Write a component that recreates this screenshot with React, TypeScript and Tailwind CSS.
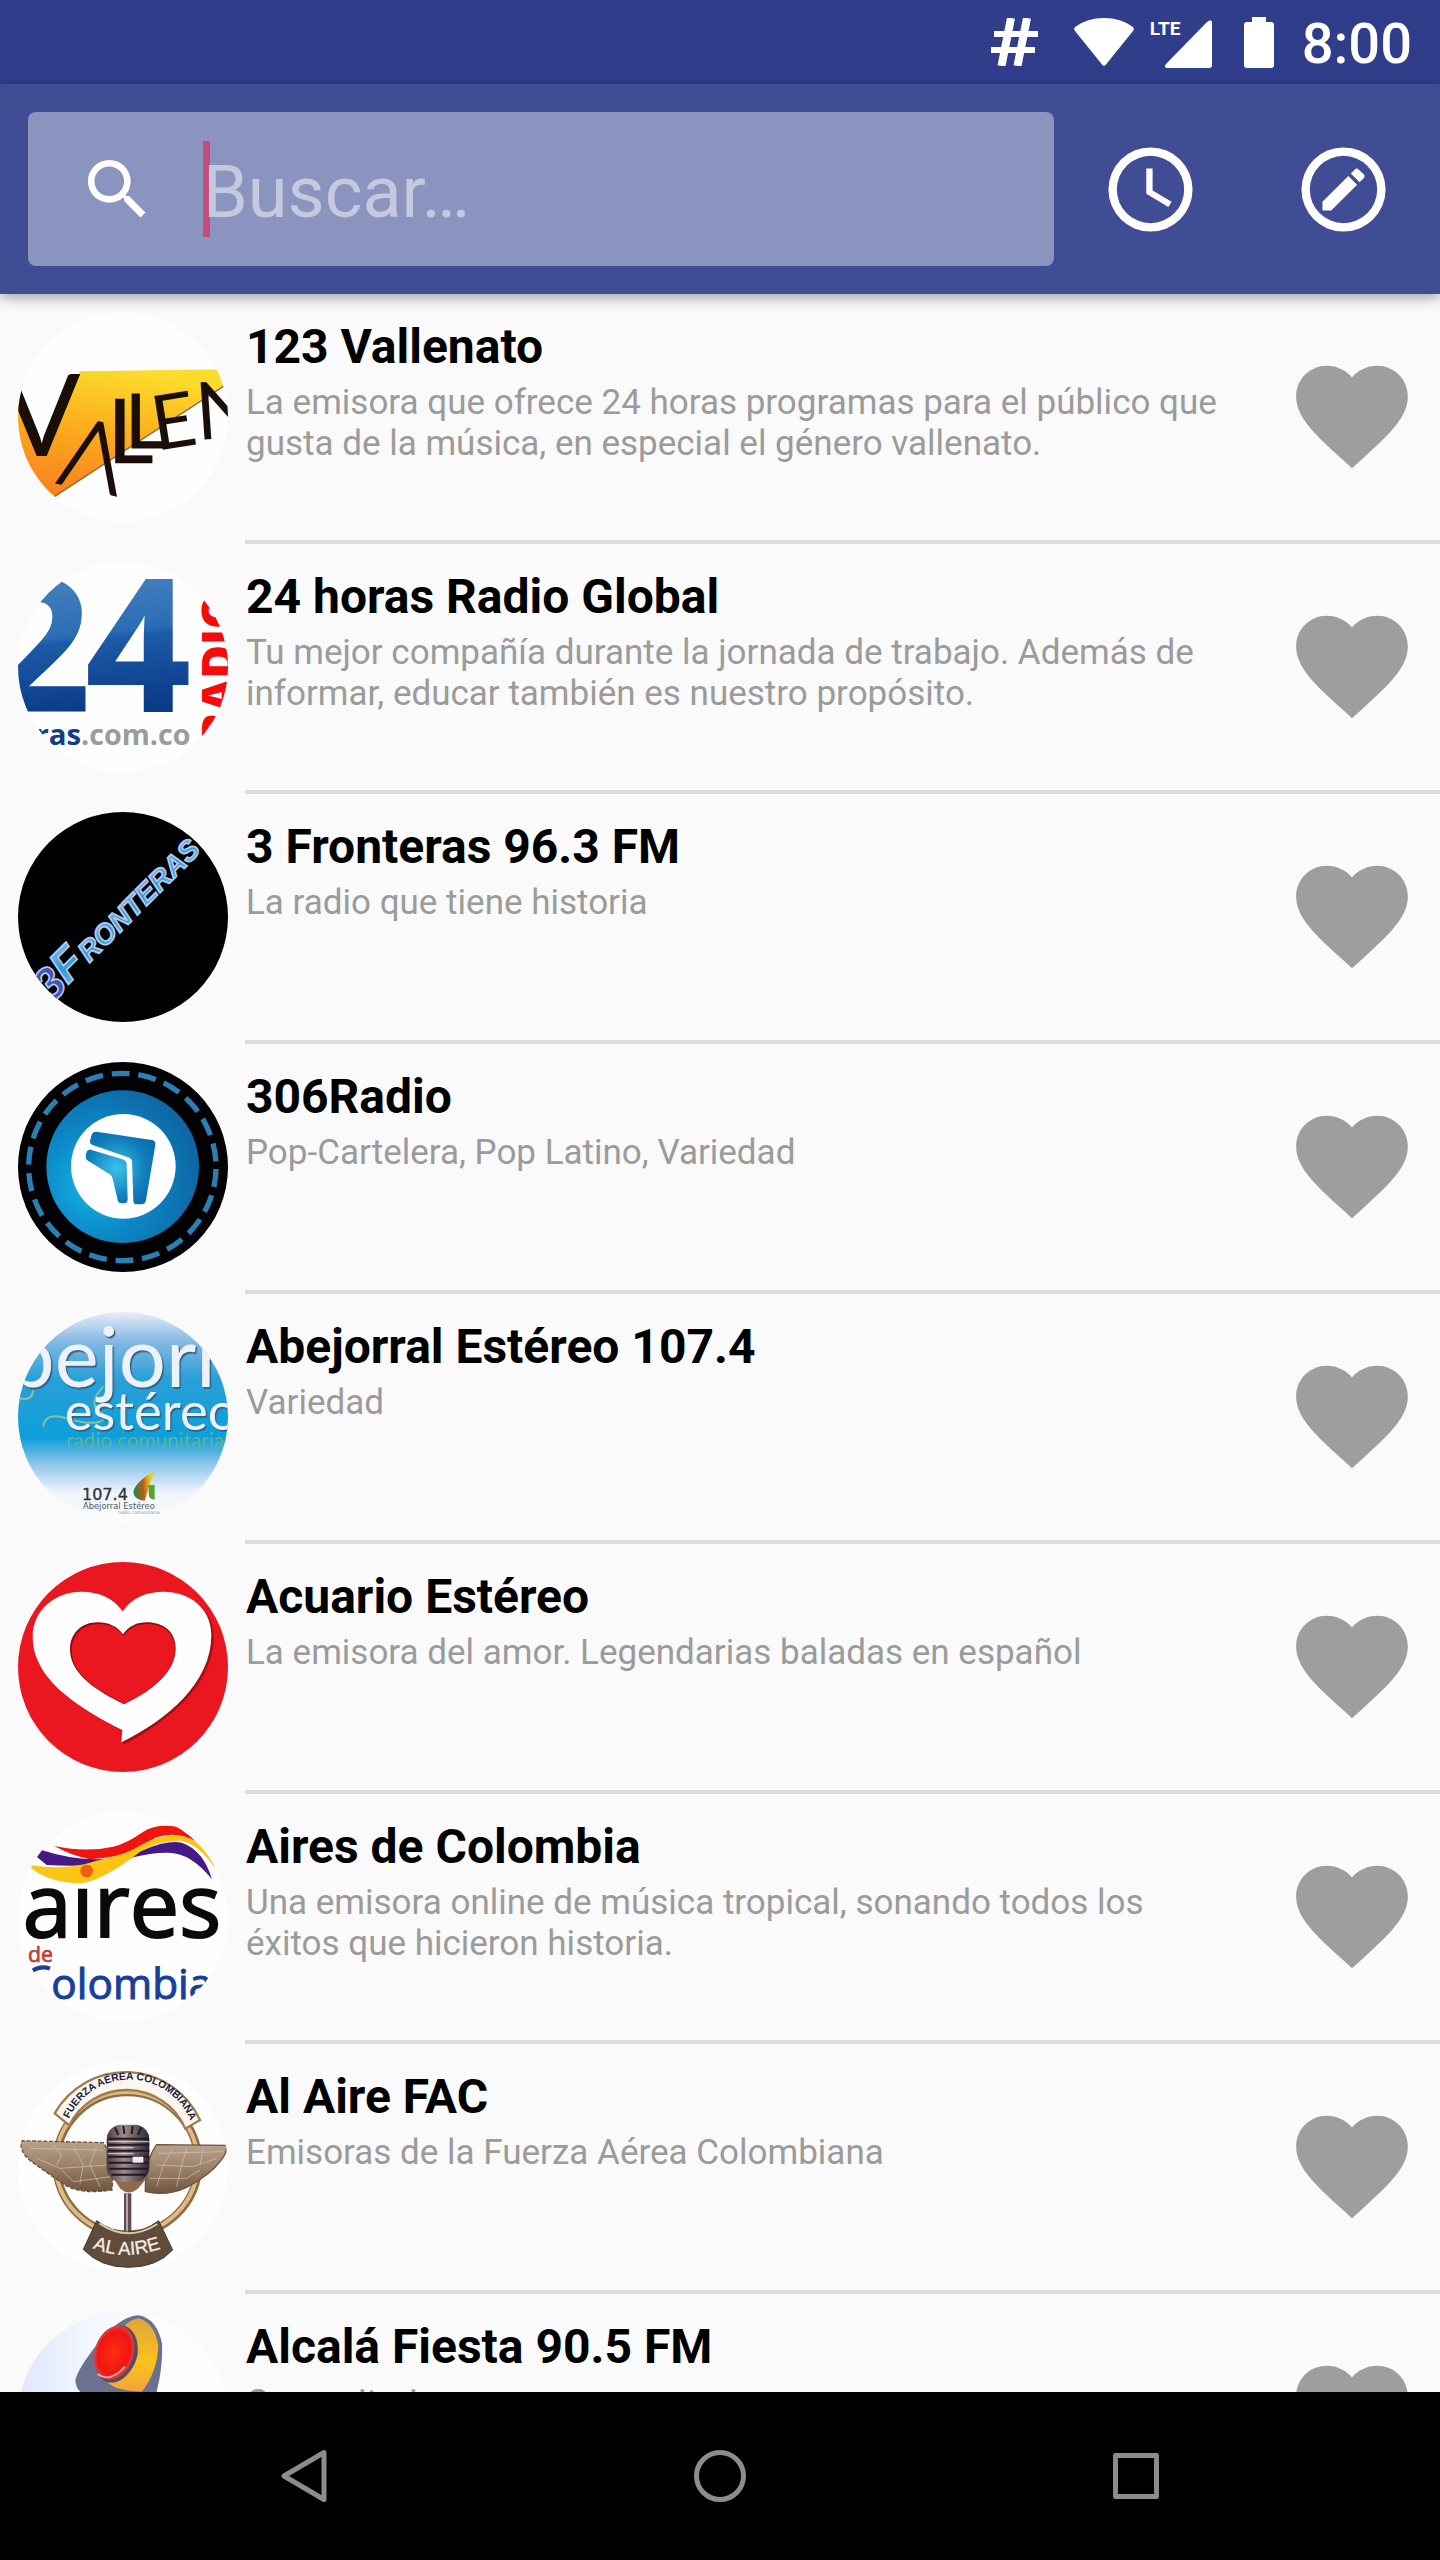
import type { ReactNode } from "react";

function Vallenato() {
  return (
    <>
      <defs>
        <linearGradient id="val-sun" x1="0.2" y1="1" x2="0.5" y2="0">
          <stop offset="0" stopColor="#f7801f" />
          <stop offset="0.5" stopColor="#fbaa1c" />
          <stop offset="1" stopColor="#fbdc2c" />
        </linearGradient>
      </defs>
      <rect x="54" y="36" width="630" height="630" fill="#fefefe" />
      <path d="M54 270L130 465L240 214L690 208V246L165 592L54 500Z" fill="url(#val-sun)" />
      <path d="M684 250L165 588" stroke="#8d6a4a" strokeWidth="4" />
      <g fill="#1a0f08" fontFamily="Lato, sans-serif">
        <text transform="translate(8 468)" fontSize="345">V</text>
        <text transform="translate(166 548) rotate(12)" fontSize="290" fontWeight="300" stroke="#1a0f08" strokeWidth="5">Λ</text>
        <text transform="translate(322 488)" fontSize="270" stroke="#1a0f08" strokeWidth="2">L</text>
        <text transform="translate(376 444)" fontSize="225" stroke="#1a0f08" strokeWidth="3">L</text>
        <text transform="translate(468 452) rotate(-9)" fontSize="228">E</text>
        <text transform="translate(592 420) rotate(-4)" fontSize="240">N</text>
      </g>
    </>
  );
}

function VeinticuatroHoras() {
  return (
    <>
      <defs>
        <linearGradient id="h24-blue" gradientUnits="userSpaceOnUse" x1="200" y1="90" x2="240" y2="486">
          <stop offset="0" stopColor="#4380bd" />
          <stop offset="0.42" stopColor="#2b6cb4" />
          <stop offset="0.47" stopColor="#1d5ba8" />
          <stop offset="1" stopColor="#0a3b87" />
        </linearGradient>
      </defs>
      <rect x="54" y="36" width="630" height="630" fill="#fefefe" />
      <g fontFamily="'Open Sans', sans-serif" fontWeight="700">
        <g stroke="url(#h24-blue)" strokeWidth="6">
          <text x="-42" y="484" fontSize="548" fill="url(#h24-blue)">2</text>
          <text x="258" y="484" fontSize="548" fill="url(#h24-blue)">4</text>
        </g>
        <text x="243" y="585" fontSize="88" fill="#153d84" textAnchor="end">ras</text>
        <text x="243" y="585" fontSize="86" fill="#9b9b9b">.com.co</text>
        <text transform="translate(706 580) rotate(-90)" fontSize="138" fill="#f40b0b" fontWeight="800">RADIO</text>
      </g>
    </>
  );
}

function Fronteras() {
  return (
    <>
      <defs>
        <linearGradient id="fro-ice" x1="0" y1="0" x2="0" y2="1">
          <stop offset="0" stopColor="#8ec9f0" />
          <stop offset="0.5" stopColor="#2b9bd4" />
          <stop offset="1" stopColor="#55c4ec" />
        </linearGradient>
      </defs>
      <rect x="54" y="36" width="630" height="630" fill="#010103" />
      <g
        transform="translate(268 490) rotate(-45)"
        fontFamily="'Liberation Sans', sans-serif"
        fontWeight="700"
        fontStyle="italic"
        fill="url(#fro-ice)"
        stroke="#b9c6ee"
        strokeWidth="5"
      >
        <text x="0" y="0" fontSize="85">RONTERAS</text>
        <text x="-92" y="0" fontSize="138">F</text>
        <text x="-168" y="6" fontSize="138" fill="#3d55b5">3</text>
      </g>
    </>
  );
}

function Radio306() {
  return (
    <>
      <defs>
        <radialGradient id="r306-disc" cx="0.3" cy="0.62" r="0.7">
          <stop offset="0" stopColor="#16b4e6" />
          <stop offset="0.45" stopColor="#0c8cc9" />
          <stop offset="1" stopColor="#0d67a5" />
        </radialGradient>
        <radialGradient id="r306-arrow" gradientUnits="userSpaceOnUse" cx="350" cy="355" r="150">
          <stop offset="0" stopColor="#3cc0ea" />
          <stop offset="0.6" stopColor="#0f7dbb" />
          <stop offset="1" stopColor="#0c64a3" />
        </radialGradient>
      </defs>
      <rect x="54" y="36" width="630" height="630" fill="#020204" />
      <circle cx="367" cy="351" r="281" fill="none" stroke="#2a80b2" strokeWidth="16" strokeDasharray="54 26.25" strokeDashoffset="-6" />
      <circle cx="368" cy="350" r="229" fill="url(#r306-disc)" />
      <circle cx="370" cy="349" r="157" fill="#fff" />
      <path
        d="M290 245L455 270Q468 272 466 285L438 450Q436 463 424 463H410Q400 463 400 452L396 334Q396 326 388 323L278 285Q269 282 270 274L274 257Q277 244 290 245Z"
        fill="url(#r306-arrow)"
      />
      <path
        d="M272 299L368 328Q379 332 380 343L383 448Q383 460 373 460H364Q355 460 353 450L338 386Q336 376 328 372L264 332Q256 327 257 318Q260 296 272 299Z"
        fill="url(#r306-arrow)"
      />
    </>
  );
}

function Abejorral() {
  return (
    <>
      <defs>
        <linearGradient id="abe-sky" x1="0" y1="0" x2="0" y2="1">
          <stop offset="0" stopColor="#e8eef8" />
          <stop offset="0.14" stopColor="#84b8e2" />
          <stop offset="0.32" stopColor="#2a9fd8" />
          <stop offset="0.6" stopColor="#0d9fda" />
          <stop offset="0.72" stopColor="#8cc4ea" />
          <stop offset="0.86" stopColor="#eef5fc" />
          <stop offset="1" stopColor="#fdfdfe" />
        </linearGradient>
        <linearGradient id="abe-leaf" x1="0" y1="0.5" x2="1" y2="0.4">
          <stop offset="0" stopColor="#1b8a4a" />
          <stop offset="0.45" stopColor="#c0571d" />
          <stop offset="0.8" stopColor="#e3cf1c" />
        </linearGradient>
      </defs>
      <rect x="54" y="36" width="630" height="630" fill="url(#abe-sky)" />
      <path d="M130 380Q135 335 200 355T300 365Q330 350 290 330Q270 300 310 260M60 295Q95 305 100 270" fill="none" stroke="#8cbf9c" strokeWidth="6" />
      <g
        fontFamily="Lato, sans-serif"
        fill="#eef2f7"
        className="[filter:drop-shadow(4px_5px_1px_#2c5f86)]"
      >
        <text x="24" y="262" fontSize="250">bejorra</text>
        <text x="194" y="391" fontSize="158">estéreo</text>
      </g>
      <text x="198" y="445" fontSize="62" fontFamily="Lato, sans-serif" fill="#5fb39a">radio comunitaria</text>
      <g fontFamily="'DejaVu Sans', sans-serif">
        <text x="246" y="600" fontSize="48" fill="#2f3336" stroke="#2f3336" strokeWidth="1">107.4</text>
        <text x="249" y="626" fontSize="25" fill="#50585c">Abejorral Estéreo</text>
        <text x="355" y="642" fontSize="14" fill="#8d9498">radio comunitaria</text>
      </g>
      <path d="M400 578Q402 548 464 512Q446 560 434 602Q404 600 400 578Z" fill="url(#abe-leaf)" />
      <path d="M446 555H464V598Q446 600 446 580Z" fill="#57a52c" />
    </>
  );
}

function Acuario() {
  return (
    <>
      <rect x="54" y="36" width="630" height="630" fill="#ea1620" />
      <path
        d="M368 188C340 145 295 125 245 125C165 125 98 180 98 260C98 390 240 475 368 540L364 580C500 510 636 400 636 255C636 175 570 125 490 125C440 125 395 145 368 188Z"
        fill="#8d0c12"
        opacity="0.75"
        transform="translate(5 5)"
      />
      <path
        d="M368 184C340 143 295 125 245 125C165 125 98 180 98 260C98 390 240 475 367 540L364 577C500 510 634 400 634 255C634 175 570 125 490 125C440 125 395 143 368 184Z"
        fill="#fefefe"
      />
      <path
        d="M369 253C350 228 325 217 293 217C245 217 210 250 210 298C210 375 295 425 372 463C450 425 527 370 527 295C527 245 490 217 440 217C410 217 388 228 369 253Z"
        fill="#8d0c12"
      />
      <path
        d="M371 258C352 233 327 222 297 222C250 222 215 255 215 301C215 377 298 424 373 461C450 424 525 371 525 297C525 250 490 222 441 222C412 222 390 233 371 258Z"
        fill="#ea1620"
      />
    </>
  );
}

function Aires() {
  return (
    <>
      <rect x="54" y="36" width="630" height="630" fill="#fefefe" />
      <g fontFamily="'Open Sans', sans-serif">
        <text x="68" y="410" fontSize="264" fontWeight="500" fill="#0a0a0a" stroke="#0a0a0a" strokeWidth="6">aires</text>
        <text x="84" y="487" fontSize="64" fill="#c63a34" stroke="#c63a34" strokeWidth="2">de</text>
        <text x="154" y="598" fontSize="127" fontWeight="500" fill="#17409c" stroke="#17409c" strokeWidth="3">olombia</text>
      </g>
      <path d="M98 512Q122 496 150 506" fill="none" stroke="#17409c" strokeWidth="12" />
      <path d="M124 150Q210 178 290 178Q360 178 430 150Q500 120 545 128Q610 150 636 238Q570 155 500 158Q450 158 400 172Q300 205 140 195L110 170Z" fill="#451a86" />
      <path d="M94 196Q200 212 290 182Q360 170 430 130Q500 95 565 112Q620 140 645 205Q595 130 540 122Q480 120 420 155Q320 235 245 250Q150 250 94 204Z" fill="#fcc414" />
      <path d="M163 138Q260 158 340 140Q380 130 430 95Q470 70 530 80Q565 95 585 122Q530 92 470 112Q430 130 400 148Q350 175 270 178Q210 165 163 138Z" fill="#f0160f" />
      <circle cx="260" cy="213" r="19" fill="#ee5f14" />
    </>
  );
}

function AlAire() {
  return (
    <>
      <defs>
        <path id="fac-arc" d="M207 206A198 198 0 0 1 578 232" />
        <path id="fac-base" d="M278 594Q385 640 520 582" />
        <linearGradient id="fac-wing" x1="0" y1="0" x2="0" y2="1">
          <stop offset="0" stopColor="#b9a38e" />
          <stop offset="0.5" stopColor="#9b8069" />
          <stop offset="1" stopColor="#6f5440" />
        </linearGradient>
        <linearGradient id="fac-mic" x1="0" y1="0" x2="1" y2="0">
          <stop offset="0" stopColor="#4b3a3e" />
          <stop offset="0.4" stopColor="#a08b8c" />
          <stop offset="1" stopColor="#2d2633" />
        </linearGradient>
      </defs>
      <rect x="54" y="36" width="630" height="630" fill="#fefefe" />
      <circle cx="382" cy="340" r="213" fill="none" stroke="#8f6c43" strokeWidth="24" />
      <circle cx="380" cy="339" r="213" fill="none" stroke="#dcbb84" strokeWidth="12" />
      <path d="M164 190A245 245 0 0 1 600 210L556 236A192 192 0 0 0 208 226Z" fill="#fbf7f0" stroke="#a07c4c" strokeWidth="7" />
      <text fontFamily="'Liberation Sans', sans-serif" fontWeight="700" fontSize="31" fill="#20203f">
        <textPath href="#fac-arc">FUERZA AÉREA COLOMBIANA</textPath>
      </text>
      <path d="M62 272L310 278Q345 330 336 420Q240 435 190 402Q130 360 95 335Q60 310 62 272Z" fill="url(#fac-wing)" stroke="#6d5138" strokeWidth="4" strokeDasharray="12 5" />
      <path d="M680 286L470 284Q435 330 436 425Q500 440 560 412Q630 375 660 335Q682 310 680 286Z" fill="url(#fac-wing)" stroke="#6d5138" strokeWidth="4" />
      <path
        d="M90 295L310 300M110 325L180 355L320 345M180 355L220 395L330 380M160 285L185 315L170 345M220 290L250 345L240 400M290 290L270 345L300 410M470 345L580 350L650 325M450 385L560 385L600 360M520 295L490 345L470 410M560 295L545 345L530 410M610 295L600 345M475 310L670 305"
        fill="none"
        stroke="#d3bfa7"
        strokeWidth="3"
        opacity="0.75"
      />
      <path d="M372 430H394V552H372Z" fill="#5d4d4f" />
      <path d="M378 430H384V552H378Z" fill="#b6a9a6" />
      <path d="M340 385H440L415 415Q385 440 360 415Z" fill="#8e6a4a" />
      <rect x="320" y="224" width="128" height="172" rx="44" fill="url(#fac-mic)" />
      <path d="M326 266H446M324 284H448M324 302H448M324 320H448M326 338H446M328 356H444M334 374H438" stroke="#1f1a24" strokeWidth="6" />
      <path d="M345 232L355 255M370 228L373 252M398 228L395 252M424 232L414 255" stroke="#1f1a24" strokeWidth="6" />
      <path d="M326 275H446M324 293H400M324 311H400" stroke="#d9cbca" strokeWidth="3" />
      <rect x="398" y="320" width="32" height="18" fill="#f2ecee" />
      <path d="M290 512Q385 580 476 512L518 600Q470 652 385 652Q300 652 250 598Z" fill="#5f4c3b" stroke="#4a392b" strokeWidth="3" />
      <path d="M298 520Q385 578 472 522" fill="none" stroke="#dcc9ae" strokeWidth="6" />
      <text fontFamily="'Liberation Sans', sans-serif" fontSize="56" fill="#f1ebe4" stroke="#f1ebe4" strokeWidth="1">
        <textPath href="#fac-base">AL AIRE</textPath>
      </text>
    </>
  );
}

function Alcala() {
  return (
    <>
      <defs>
        <linearGradient id="alc-bg" x1="0" y1="0" x2="1" y2="0">
          <stop offset="0" stopColor="#dfe6fb" />
          <stop offset="0.35" stopColor="#f4f7fe" />
          <stop offset="0.7" stopColor="#fdfdfd" />
        </linearGradient>
        <radialGradient id="alc-red">
          <stop offset="0" stopColor="#ff2d14" />
          <stop offset="0.8" stopColor="#ef1512" />
          <stop offset="1" stopColor="#d7444c" />
        </radialGradient>
        <linearGradient id="alc-gold" x1="0" y1="0" x2="0" y2="1">
          <stop offset="0" stopColor="#dfa53c" />
          <stop offset="0.6" stopColor="#fcc21b" />
          <stop offset="1" stopColor="#f1a33a" />
        </linearGradient>
      </defs>
      <rect x="54" y="36" width="630" height="630" fill="url(#alc-bg)" />
      <path d="M415 46Q365 50 310 110Q235 200 226 240Q228 275 262 290L460 310Q490 215 486 130Q470 55 415 46Z" fill="#6d7191" />
      <path d="M416 55Q385 60 365 88Q412 100 414 160Q405 225 322 246Q345 272 425 275Q470 220 475 140Q465 70 416 55Z" fill="url(#alc-gold)" />
      <ellipse cx="348" cy="162" rx="62" ry="88" transform="rotate(18 348 162)" fill="#5a4a60" />
      <ellipse cx="342" cy="158" rx="58" ry="83" transform="rotate(18 342 158)" fill="url(#alc-red)" />
      <path d="M292 222Q330 250 375 200" fill="none" stroke="#f6b1a4" strokeWidth="5" />
    </>
  );
}

type Station = { name: string; about: string; art: ReactNode };

const stations: Station[] = [
  {
    name: "123 Vallenato",
    about: "La emisora que ofrece 24 horas programas para el público que gusta de la música, en especial el género vallenato.",
    art: <Vallenato />,
  },
  {
    name: "24 horas Radio Global",
    about: "Tu mejor compañía durante la jornada de trabajo. Además de informar, educar también es nuestro propósito.",
    art: <VeinticuatroHoras />,
  },
  { name: "3 Fronteras 96.3 FM", about: "La radio que tiene historia", art: <Fronteras /> },
  { name: "306Radio", about: "Pop-Cartelera, Pop Latino, Variedad", art: <Radio306 /> },
  { name: "Abejorral Estéreo 107.4", about: "Variedad", art: <Abejorral /> },
  { name: "Acuario Estéreo", about: "La emisora del amor. Legendarias baladas en español", art: <Acuario /> },
  {
    name: "Aires de Colombia",
    about: "Una emisora online de música tropical, sonando todos los éxitos que hicieron historia.",
    art: <Aires />,
  },
  { name: "Al Aire FAC", about: "Emisoras de la Fuerza Aérea Colombiana", art: <AlAire /> },
  { name: "Alcalá Fiesta 90.5 FM", about: "Comunitaria", art: <Alcala /> },
];

function StatusBar() {
  return (
    <div className="flex h-[84px] shrink-0 items-center justify-end bg-[#303d8b] pr-7 text-white">
      <svg className="mr-9 h-12 w-12" viewBox="0 0 48 48" fill="none" stroke="currentColor" strokeWidth="6" aria-hidden="true">
        <path d="M21 0L11.500 48M37 0L27.500 48" strokeWidth="8" />
        <path d="M4 16H48M1 32H45" />
      </svg>
      <svg className="mr-4 h-12 w-[60px]" viewBox="0 0 60 48" fill="currentColor" aria-hidden="true">
        <path d="M1 9Q13 0 30 0T59 9Q60.500 11 59 13L32 46.500Q30 49 28 46.500L1 13Q-0.500 11 1 9Z" />
      </svg>
      <div className="relative mr-8 h-[51px] w-[62px]">
        <span className="absolute top-0 left-0 text-[19px] leading-6 font-bold">LTE</span>
        <svg className="h-full w-full" viewBox="0 0 62 51" fill="currentColor" aria-hidden="true">
          <path d="M16 47L57 5Q62 1 62 6V48Q62 51 59 51H18Q13 51 16 47Z" />
        </svg>
      </div>
      <svg className="mr-7 h-[51px] w-[30px]" viewBox="0 0 30 51" fill="currentColor" aria-hidden="true">
        <path d="M8 0H22V5H27Q30 5 30 8V48Q30 51 27 51H3Q0 51 0 48V8Q0 5 3 5H8Z" />
      </svg>
      <time className="pt-1 text-[56px] leading-[64px] font-medium">8:00</time>
    </div>
  );
}

function Toolbar() {
  return (
    <header className="relative z-10 flex h-[210px] shrink-0 items-center bg-[#404d95] pl-7 text-white shadow-[0_4px_12px_rgba(0,0,0,0.35)]">
      <label className="relative flex h-[154px] min-w-0 flex-1 items-center rounded-lg bg-[#8b93bf] pl-[50px]">
        <svg className="mr-[46px] h-[79px] w-[79px] shrink-0" viewBox="0 0 24 24" fill="currentColor" role="img" aria-label="Buscar">
          <path d="M15.500 14h-.79l-.28-.27A6.471 6.471 0 0 0 16 9.500 6.500 6.500 0 1 0 9.500 16c1.610 0 3.090-.59 4.230-1.570l.27.28v.79l5 4.990L20.490 19l-4.990-5zm-6 0C7.010 14 5 11.990 5 9.500S7.010 5 9.500 5 14 7.010 14 9.500 11.990 14 9.500 14z" />
        </svg>
        <span className="absolute left-[175px] h-24 w-[7px] bg-[#c64a7b]" />
        <input
          type="text"
          placeholder="Buscar…"
          className="relative min-w-0 flex-1 bg-transparent pt-2 text-[72px] leading-[84px] outline-none placeholder:text-[#c5c9e0]"
        />
      </label>
      <button type="button" aria-label="Recientes" className="flex h-full w-[193px] items-center justify-center">
        <svg className="h-[101px] w-[101px]" viewBox="0 0 24 24" fill="currentColor" aria-hidden="true">
          <path d="M12 2a10 10 0 1 0 0 20 10 10 0 0 0 0-20zm0 18a8 8 0 1 1 0-16 8 8 0 0 1 0 16z" />
          <path d="M12.500 7H11v6l5.250 3.150.75-1.230-4.500-2.670z" />
        </svg>
      </button>
      <button type="button" aria-label="Editar" className="flex h-full w-[193px] items-center justify-center">
        <svg className="h-[101px] w-[101px]" viewBox="0 0 24 24" fill="currentColor" aria-hidden="true">
          <path d="M12 2a10 10 0 1 0 0 20 10 10 0 0 0 0-20zm0 18a8 8 0 1 1 0-16 8 8 0 0 1 0 16z" />
          <path
            transform="translate(5.330 5.330) scale(0.556)"
            d="M3 17.250V21h3.750L17.810 9.940l-3.750-3.750L3 17.250zM20.710 7.040c.39-.39.39-1.020 0-1.410l-2.340-2.340c-.39-.39-1.020-.39-1.410 0l-1.830 1.830 3.750 3.750 1.830-1.830z"
          />
        </svg>
      </button>
    </header>
  );
}

function StationRow({ name, about, art }: Station) {
  return (
    <li className="flex">
      <div className="w-[245px] shrink-0 py-[18px] pl-[18px]">
        <svg className="h-[210px] w-[210px] rounded-full" viewBox="54 36 630 630" role="img" aria-label={name}>
          {art}
        </svg>
      </div>
      <div className="flex min-h-[250px] min-w-0 flex-1 border-b-4 border-[#dbdbdb] pr-[21px]">
        <div className="min-w-0 flex-1 pt-6 pl-px">
          <h2 className="text-[48px] leading-[57px] font-bold text-black">{name}</h2>
          <p className="mt-[7px] text-[35px] leading-[41px] text-[#9b9b9b]">{about}</p>
        </div>
        <button type="button" aria-label={`Añadir ${name} a favoritos`} className="ml-11 flex shrink-0 items-center pb-[3px] text-[#9e9e9e]">
          <svg className="h-[134px] w-[134px]" viewBox="0 0 24 24" fill="currentColor" aria-hidden="true">
            <path d="M12 21.350l-1.450-1.320C5.400 15.360 2 12.280 2 8.500 2 5.420 4.420 3 7.500 3c1.740 0 3.410.81 4.500 2.090C13.090 3.810 14.760 3 16.500 3 19.580 3 22 5.420 22 8.500c0 3.780-3.400 6.860-8.550 11.540L12 21.350z" />
          </svg>
        </button>
      </div>
    </li>
  );
}

function NavBar() {
  const button = "flex h-full flex-1 items-center justify-center";
  return (
    <nav className="flex h-[168px] shrink-0 bg-black px-24 text-[#8c8c8c]" aria-label="Sistema">
      <button type="button" aria-label="Atrás" className={button}>
        <svg className="h-14 w-14" viewBox="0 0 56 56" fill="none" stroke="currentColor" strokeWidth="5" strokeLinejoin="round" aria-hidden="true">
          <path d="M48 4.500V51.500L8 28Z" />
        </svg>
      </button>
      <button type="button" aria-label="Inicio" className={button}>
        <svg className="h-14 w-14" viewBox="0 0 56 56" fill="none" stroke="currentColor" strokeWidth="5" aria-hidden="true">
          <circle cx="28" cy="28" r="23.500" />
        </svg>
      </button>
      <button type="button" aria-label="Aplicaciones recientes" className={button}>
        <svg className="h-14 w-14" viewBox="0 0 56 56" fill="none" stroke="currentColor" strokeWidth="5" strokeLinejoin="round" aria-hidden="true">
          <rect x="7.500" y="7.500" width="41" height="41" />
        </svg>
      </button>
    </nav>
  );
}

export default function App() {
  return (
    <div className="flex h-screen flex-col overflow-hidden bg-[#fafafa] font-[Roboto,sans-serif]">
      <StatusBar />
      <Toolbar />
      <main className="min-h-0 flex-1 overflow-y-auto [scrollbar-width:none]">
        <ul>
          {stations.map((station) => (
            <StationRow key={station.name} {...station} />
          ))}
        </ul>
      </main>
      <NavBar />
    </div>
  );
}
